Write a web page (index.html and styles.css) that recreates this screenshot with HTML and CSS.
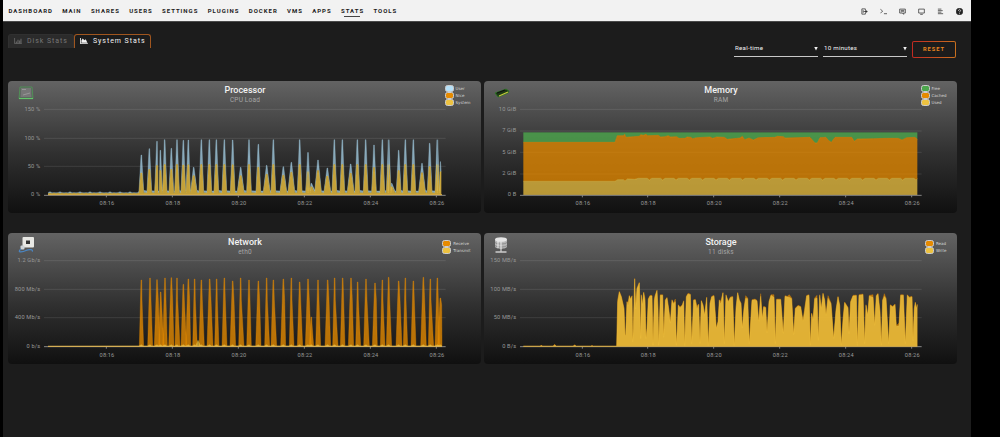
FILE: index.html
```html
<!DOCTYPE html>
<html lang="en">
<head>
    <meta charset="UTF-8">
    <meta name="viewport" content="width=device-width, initial-scale=1.0">
    <title>System Stats</title>
    <link rel="stylesheet" href="styles.css">
</head>
<body>
    <div class="page">
        <header class="menu">
            <nav>
                <a href="#">DASHBOARD</a>
                <a href="#">MAIN</a>
                <a href="#">SHARES</a>
                <a href="#">USERS</a>
                <a href="#">SETTINGS</a>
                <a href="#">PLUGINS</a>
                <a href="#">DOCKER</a>
                <a href="#">VMS</a>
                <a href="#">APPS</a>
                <a href="#" class="active">STATS</a>
                <a href="#">TOOLS</a>
            </nav>
            <div class="tools">
                <svg viewBox="0 0 16 16"><path d="M10 4.500V2H2v12h8v-2.500M5 5v6M6 8h6" /><path class="solid" d="M10.500 5.500l4 2.500-4 2.500z" /></svg>
                <svg viewBox="0 0 16 16"><path d="M1 3l5 4-5 5M9 13h7" /></svg>
                <svg viewBox="0 0 16 16"><path d="M1.500 2.500h13v9h-4v3l-3-3h-6zM4 5.500h8M4 8.500h8" /></svg>
                <svg viewBox="0 0 16 16"><path d="M1.500 2.500h13v9h-13zM5 14.500h6" /></svg>
                <svg viewBox="0 0 16 16"><path d="M2 2.500h8M2 6h11M2 9.500h8M2 13h12" /></svg>
                <svg viewBox="0 0 16 16"><circle class="solid" cx="8" cy="8" r="7.500" /><path class="mark" d="M5.500 6.500C5.500 3 10.500 3 10.500 6c0 2-2.500 1.500-2.500 3.500M8 11v2" /></svg>
            </div>
        </header>

        <div class="toolbar">
            <div class="tabs">
                <a href="#" class="tab"><svg viewBox="0 0 18 14"><path d="M1 0v13h17" fill="none" stroke="currentColor" stroke-width="1.500" /><path d="M4 8h2v4H4zM8 4h2v8H8zM12 6h2v6h-2zM15 2h2v10h-2z" /></svg>Disk Stats</a>
                <a href="#" class="tab current"><svg viewBox="0 0 18 14"><path d="M0 0h2v12h16v2H0z" /><path d="M3 11V6l3-5 4 4 3-2 4 8z" /></svg>System Stats</a>
            </div>
            <div class="controls">
                <div class="select"><span>Real-time</span><i></i></div>
                <div class="select"><span>10 minutes</span><i></i></div>
                <button class="reset">RESET</button>
            </div>
        </div>

        <main class="charts">
            <section class="card">
                <div class="card-head">
                    <svg class="icon" viewBox="0 0 16 14"><path d="M2 1h12l1 11.500H1z" fill="#5a625d" stroke="#4f9a56" stroke-width=".8" /><path d="M1 12.500h14" stroke="#62c76a" stroke-width="1.200" /><path d="M3 2h10l.5 9H2.500z" fill="#777" /><path d="M4 3.500h4M5 9l7-2" stroke="#a5a5a5" stroke-width=".7" /></svg>
                    <div class="title"><h2>Processor</h2><p>CPU Load</p></div>
                    <ul class="legend">
                        <li class="blue">User</li>
                        <li class="orange">Nice</li>
                        <li class="yellow">System</li>
                    </ul>
                </div>
                <svg class="plot" id="cpu" viewBox="24 96 1419 318"></svg>
            </section>

            <section class="card">
                <div class="card-head">
                    <svg class="icon memory" viewBox="0 0 16 10"><path d="M1 5l11-4 3 2-1 2-10 4z" fill="#1d3a16" stroke="#2f7d25" stroke-width=".8" /><path d="M5 8l9-4" stroke="#c8c83c" stroke-width="1.200" /><path d="M3 5l8-3" stroke="#111" stroke-width="1.300" /></svg>
                    <div class="title"><h2>Memory</h2><p>RAM</p></div>
                    <ul class="legend">
                        <li class="green">Free</li>
                        <li class="orange">Cached</li>
                        <li class="yellow">Used</li>
                    </ul>
                </div>
                <svg class="plot" id="ram" viewBox="12 96 1419 318"></svg>
            </section>

            <section class="card">
                <div class="card-head">
                    <svg class="icon network" viewBox="0 0 16 16"><rect x="4.500" y="0" width="11.500" height="10.500" rx="1" fill="#e8e8e4" /><path d="M8 3.500h4v3.500H8z" fill="#333" /><rect x="2.500" y="8.500" width="4" height="4" rx="1" fill="#cdd3d8" /><path d="M3 12c-5 4 2 3 5 1.500s8-1 6 1" fill="none" stroke="#4a86c4" stroke-width="1.200" /></svg>
                    <div class="title"><h2>Network</h2><p>eth0</p></div>
                    <ul class="legend">
                        <li class="orange">Receive</li>
                        <li class="yellow">Transmit</li>
                    </ul>
                </div>
                <svg class="plot" id="net" viewBox="24 93 1419 315"></svg>
            </section>

            <section class="card">
                <div class="card-head">
                    <svg class="icon storage" viewBox="0 0 14 16"><path d="M1 2.500v7c0 3 12 3 12 0v-7z" fill="#b5b5b5" /><ellipse cx="7" cy="2.500" rx="6" ry="2.300" fill="#e6e6e6" /><path d="M1 5.500c2 2 10 2 12 0M1 8.500c2 2 10 2 12 0" fill="none" stroke="#7c7c7c" stroke-width=".7" /><path d="M4 4v7M7 4.500v7.500" stroke="#eee" /><path d="M7 11v4M1.500 15h11" stroke="#ccc" stroke-width="1.300" /></svg>
                    <div class="title"><h2>Storage</h2><p>11 disks</p></div>
                    <ul class="legend">
                        <li class="orange">Read</li>
                        <li class="yellow">Write</li>
                    </ul>
                </div>
                <svg class="plot" id="disk" viewBox="12 93 1419 315"></svg>
            </section>
        </main>
    </div>
    <script src="script.js"></script>
</body>
</html>
```

FILE: styles.css
```css
body {
    margin: 0;
    background-color: #000;
    color: #f2f2f2;
    font-family: Roboto, "Noto Sans", sans-serif;
    overflow: hidden;
}

a {
    color: inherit;
    text-decoration: none;
}

.page {
    box-sizing: border-box;
    width: 968px;
    height: 437px;
    margin-left: 3px;
    background-color: #1c1c1c;
}

/* top menu */
.menu {
    box-sizing: border-box;
    display: flex;
    justify-content: space-between;
    height: 22px;
    padding: 0 8px 0 5.5px;
    background-color: #f2f2f2;
    border-bottom: 1px solid #4a4a4a;
    color: #1c1b1b;
}

.menu nav {
    display: flex;
    gap: 9.3px;
    padding-top: 6px;
}

.menu nav a {
    height: 11px;
    font-size: 6px;
    line-height: 9px;
    font-weight: 700;
    letter-spacing: 1px;
}

.menu nav a.active {
    background: linear-gradient(#444, #444) 3px 10px / 16px 1px no-repeat;
}

.tools {
    display: flex;
    align-items: center;
    gap: 12px;
    padding-top: 2px;
}

.tools svg {
    width: 7px;
    height: 7px;
    fill: none;
    stroke: #333;
    stroke-width: 1.7;
}

.tools .solid {
    fill: #222;
}

.tools .mark {
    stroke: #f2f2f2;
}

/* tabs and selectors */
.toolbar {
    display: flex;
    justify-content: space-between;
    height: 59px;
    padding: 0 15px 0 5px;
    box-sizing: border-box;
}

.tabs {
    display: flex;
    padding-top: 12px;
}

.tab {
    box-sizing: border-box;
    display: flex;
    align-items: center;
    width: 66px;
    height: 14px;
    padding: 0 0 1px 5px;
    border: 1px solid #303030;
    border-bottom: none;
    border-radius: 3px 3px 0 0;
    background-color: #2b2b2b;
    color: #777;
    font-size: 7px;
    letter-spacing: 0.95px;
    white-space: nowrap;
}

.tab svg {
    width: 8px;
    height: 6px;
    margin-right: 5px;
    fill: currentColor;
}

.tab.current {
    width: 77px;
    padding-left: 5px;
    border-color: #a0561f;
    background-color: #1c1c1c;
    color: #f2f2f2;
}

.controls {
    display: flex;
    gap: 5px;
    padding-top: 19px;
}

.select {
    box-sizing: border-box;
    display: flex;
    align-items: center;
    justify-content: space-between;
    width: 84px;
    height: 16px;
    border-bottom: 1px solid #c8c8c8;
    font-size: 6.2px;
    letter-spacing: 0.25px;
}

.select span {
    padding: 0 0 1px 1px;
}

.select i {
    width: 4px;
    height: 4px;
    background-color: #f2f2f2;
    clip-path: polygon(0 0, 100% 0, 50% 100%);
}

.reset {
    box-sizing: border-box;
    width: 44px;
    height: 17px;
    padding: 0 0 1px;
    border: 1px solid transparent;
    border-radius: 2px;
    background: linear-gradient(#1c1c1c, #1c1c1c) padding-box, linear-gradient(90deg, #c22a22, #c8701f) border-box;
    color: #e8851f;
    font-family: inherit;
    font-size: 5.7px;
    font-weight: 700;
    letter-spacing: 1px;
}

/* chart cards */
.charts {
    display: grid;
    grid-template-columns: 473px 473px;
    grid-template-rows: 132px 131px;
    gap: 20px 3px;
    padding-left: 5px;
}

.card {
    border-radius: 4px;
    background: linear-gradient(#636363, #303030 55%, #101010);
}

.card-head {
    display: grid;
    grid-template-columns: 100px 273px 100px;
    height: 26px;
}

.icon {
    width: 16px;
    height: 14px;
    margin: 5px 0 0 10px;
}

.icon.memory {
    height: 10px;
    margin-top: 7px;
}

.icon.network {
    height: 16px;
    margin-top: 4px;
}

.icon.storage {
    width: 14px;
    height: 16px;
    margin: 4px 0 0 10px;
}

.title {
    padding: 4px 0 0 1px;
    text-align: center;
}

.title h2 {
    margin: 0;
    font-size: 9px;
    line-height: 11px;
    font-weight: 500;
}

.title p {
    margin: 0;
    color: #a5a5a5;
    font-size: 6.5px;
    line-height: 9px;
    letter-spacing: 0.2px;
}

.legend {
    display: flex;
    flex-direction: column;
    justify-self: end;
    margin: 4px 10.5px 0 0;
    padding: 0;
    list-style: none;
    color: #d5d5d5;
    font-family: "DejaVu Sans", sans-serif;
    font-size: 4px;
    line-height: 7px;
}

#net, #disk {
    height: 105px;
}

.card:nth-child(n+3) .legend {
    margin-top: 7px;
}

.legend li {
    display: flex;
    align-items: center;
    gap: 2px;
    height: 7px;
}

.legend li::before {
    content: "";
    box-sizing: border-box;
    width: 9px;
    height: 7px;
    border: 1px solid #ccc;
    border-radius: 2.500px;
    background-color: #edc240;
}

.legend .blue::before {
    background-color: #b5e0f8;
}

.legend .orange::before {
    background-color: #e68a00;
}

.legend .green::before {
    background-color: #4da74d;
}

.plot {
    display: block;
    width: 473px;
    height: 106px;
    overflow: visible;
}

.plot text {
    fill: #999;
    font-size: 17px;
    letter-spacing: 0.5px;
}

.plot .x-label {
    text-anchor: middle;
}

.plot .y-label {
    text-anchor: end;
}

.grid {
    stroke: rgba(255, 255, 255, 0.1);
    stroke-width: 3;
}

.axis {
    stroke: #858585;
    stroke-width: 3;
}
```

FILE: script.js
```js
var NS = 'http://www.w3.org/2000/svg';
var BLUE = '#a5d0e6', ORANGE = '#e68a00', YELLOW = '#edc240', GREEN = '#4da74d';

function add(svg, name, attrs, text) {
    var el = document.createElementNS(NS, name);
    for (var key in attrs) el.setAttribute(key, attrs[key]);
    if (text) el.textContent = text;
    svg.appendChild(el);
}

function area(svg, points, base, color, opacity) {
    var line = points.map(function (p) { return p.join(','); }).join(' ');
    var first = points[0][0], last = points[points.length - 1][0];
    add(svg, 'polygon', { points: first + ',' + base + ' ' + line + ' ' + last + ',' + base, fill: color, 'fill-opacity': opacity });
    add(svg, 'polyline', { points: line, fill: 'none', stroke: color, 'stroke-width': 1.5, 'stroke-opacity': 0.65 });
}

function grid(svg, left, labels, rows, base) {
    labels.forEach(function (label, i) {
        if (rows[i] !== base) add(svg, 'line', { 'class': 'grid', x1: left, x2: left + 1205, y1: rows[i], y2: rows[i] });
        add(svg, 'text', { 'class': 'y-label', x: left - 11, y: rows[i] + 4 }, label);
    });
}

function axis(svg, left, base, ticks) {
    add(svg, 'line', { 'class': 'axis', x1: left, x2: left + 1205, y1: base + 1, y2: base + 1 });
    ticks.forEach(function (x, i) {
        add(svg, 'line', { 'class': 'axis', x1: x, x2: x, y1: base, y2: base + 7 });
        add(svg, 'text', { 'class': 'x-label', x: x + 2, y: base + 31 }, '08:' + (16 + i * 2));
    });
}

var leftTicks = [319, 517, 715, 913, 1111, 1309];
var rightTicks = [307, 503, 701, 899, 1097, 1295];

// x and top of every load burst
var cpu = [[424, 240], [448, 221], [471, 199], [481, 226], [494, 194], [514, 220], [531, 194], [550, 196], [565, 195],
    [581, 277], [604, 194], [628, 194], [649, 194], [673, 194], [698, 195], [722, 277], [747, 194], [775, 208],
    [800, 271], [820, 194], [850, 275], [874, 262], [899, 194], [924, 232], [934, 325], [954, 255], [982, 279],
    [1003, 194], [1027, 194], [1052, 267], [1072, 194], [1097, 194], [1122, 210], [1147, 194], [1166, 194],
    [1175, 325], [1196, 226], [1216, 194], [1240, 194], [1266, 265], [1289, 205], [1312, 194], [1322, 260]];

function drawCpu() {
    var svg = document.getElementById('cpu');
    grid(svg, 132, ['150 %', '100 %', '50 %', '0 %'], [103, 190, 274, 360], 360);
    var user = [], system = [], x;
    for (x = 144; x < 416; x += 6) {
        user.push([x, 353 - (x * 7 % 5 === 0 ? 3 : 0)]);
        system.push([x, 356 - x % 4]);
    }
    cpu.forEach(function (p, i) {
        var top = p[1], wide = top > 250 ? 10 : 7;
        var sys = 360 - (360 - top) * (top > 250 ? 0.7 : 0.55);
        user.push([p[0] - wide, 348], [p[0] - 1, top], [p[0] + 1, top], [p[0] + wide, 346 + i % 3]);
        system.push([p[0] - wide, 354], [p[0] - 2, sys], [p[0] + 2, sys], [p[0] + wide, 353]);
    });
    [user, system].forEach(function (list) {
        list.sort(function (a, b) { return a[0] - b[0]; });
        while (list[list.length - 1][0] > 1326) list.pop();
    });
    // user load sits on top of system load
    add(svg, 'polygon', { points: user.concat(system.slice().reverse()).join(' '), fill: BLUE, 'fill-opacity': 0.75 });
    add(svg, 'polyline', { points: user.join(' '), fill: 'none', stroke: BLUE, 'stroke-width': 1.5, 'stroke-opacity': 0.6 });
    area(svg, system, 360, YELLOW, 0.8);
    axis(svg, 132, 360, leftTicks);
    add(svg, 'line', { x1: 144, x2: 1326, y1: 359, y2: 359, stroke: '#d8ad45', 'stroke-width': 3 });
}

function drawRam() {
    var svg = document.getElementById('ram');
    grid(svg, 120, ['10 GiB', '7 GiB', '5 GiB', '2 GiB', '0 B'], [103, 168, 232, 297, 360], 360);
    var cached = [[130, 202], [405, 202], [412, 182], [430, 182], [434, 178], [438, 187], [460, 185], [478, 184], [482, 179],
        [490, 181], [498, 178], [503, 182], [535, 181], [542, 186], [555, 185], [565, 182], [572, 186], [590, 185],
        [597, 190], [615, 190], [621, 186], [632, 187], [638, 191], [650, 188], [690, 186], [698, 190], [710, 186],
        [733, 187], [742, 193], [780, 189], [787, 184], [794, 194],
        [807, 189], [820, 195], [835, 188], [885, 187], [892, 184], [910, 185], [915, 189], [990, 187], [1005, 204],
        [1012, 204], [1020, 188], [1038, 187], [1045, 196], [1054, 202], [1065, 187], [1115, 187], [1123, 199],
        [1132, 192], [1180, 191], [1220, 190], [1255, 190], [1266, 195], [1280, 188], [1305, 187], [1312, 193]];
    var used = [[130, 319], [405, 319], [413, 314], [430, 314], [435, 318], [442, 312], [465, 313]];
    for (var x = 475; x < 1300; x += 40) used.push([x, 310], [x + 27, 310], [x + 33, 315]);
    used.push([1312, 311]);

    // stacked bands, each drawn between its own line and the one below
    function band(top, bottom, color, opacity) {
        add(svg, 'polygon', { points: top.concat(bottom.slice().reverse()).join(' '), fill: color, 'fill-opacity': opacity });
        add(svg, 'polyline', { points: top.join(' '), fill: 'none', stroke: color, 'stroke-width': 2, 'stroke-opacity': 0.7 });
    }
    band([[130, 173], [1312, 173]], cached, GREEN, 0.8);
    band(cached, used, ORANGE, 0.77);
    band(used, [[130, 360], [1312, 360]], YELLOW, 0.75);
    axis(svg, 120, 360, rightTicks);
}

var net = [[424, 156], [450, 150], [471, 155], [482, 192], [495, 150], [514, 149], [531, 150], [550, 169], [565, 153],
    [584, 153], [604, 156], [629, 153], [650, 153], [673, 150], [698, 159], [722, 150], [747, 156], [775, 159],
    [800, 150], [820, 156], [850, 153], [874, 150], [899, 162], [924, 153], [934, 267], [954, 156], [983, 156],
    [1004, 150], [1028, 150], [1053, 150], [1073, 162], [1098, 153], [1125, 165], [1147, 156], [1166, 148],
    [1196, 159], [1216, 150], [1240, 159], [1270, 148], [1291, 153], [1312, 150], [1321, 210]];

function drawNetwork() {
    var svg = document.getElementById('net');
    grid(svg, 132, ['1.2 Gb/s', '800 Mb/s', '400 Mb/s', '0 b/s'], [98, 184, 269, 355], 355);
    net.forEach(function (p, i) {
        var x = p[0], right = Math.min(x + 7 + i % 4, 1326);
        area(svg, [[x - 6 - i % 3, 354], [x - 1, p[1]], [x + 1, p[1]], [x + 2 + i % 3, Math.max(215, p[1] + 20)], [right, 354]], 355, ORANGE, 0.78);
    });
    area(svg, [[587, 354], [594, 337], [602, 354]], 355, YELLOW, 0.7);
    var sent = [[144, 355]];
    net.forEach(function (p) { sent.push([p[0] - 7, 354], [p[0], 350], [p[0] + 5, 354]); });
    area(svg, sent, 355, YELLOW, 0.8);
    axis(svg, 132, 355, leftTicks);
    add(svg, 'line', { x1: 144, x2: 1326, y1: 355, y2: 355, stroke: '#e6b850', 'stroke-width': 3 });
}

var disk = [[130, 355], [180, 355], [184, 351], [188, 355], [219, 355], [224, 349], [229, 355], [279, 355], [284, 350],
    [289, 355], [332, 355], [336, 352], [340, 355],
    [410, 355], [413, 215], [418, 190], [424, 205], [432, 240], [435, 320], [437, 320], [441, 220], [444, 225], [448, 202],
    [452, 212], [456, 203], [458, 340], [460, 300], [464, 151], [467, 235], [471, 180], [478, 163], [482, 330], [484, 200],
    [487, 230], [491, 192], [495, 210], [498, 330], [501, 300], [505, 212], [510, 202], [516, 202], [519, 350], [523, 210],
    [526, 200], [531, 186], [534, 240], [536, 350], [541, 200], [548, 200], [551, 320], [556, 215], [561, 208], [566, 240],
    [571, 283], [576, 215], [580, 225], [586, 213], [589, 350], [592, 300], [595, 230], [600, 237], [607, 230], [611, 218],
    [614, 350], [619, 205], [624, 196], [631, 198], [635, 345], [641, 215], [646, 214], [651, 235], [656, 228], [660, 345],
    [664, 217], [669, 230], [674, 260], [680, 207], [685, 350], [690, 225], [695, 205], [702, 202], [709, 300], [714, 280],
    [718, 215], [722, 220], [729, 193], [733, 345],
    [738, 200], [745, 220], [751, 207], [758, 205], [763, 350], [768, 240], [773, 193], [778, 215], [783, 225], [787, 298],
    [792, 240], [797, 203], [803, 210], [808, 345], [816, 215], [825, 213], [831, 217], [836, 280], [842, 197], [847, 270],
    [851, 235], [857, 237], [861, 312], [867, 220], [873, 200], [882, 200], [886, 345], [890, 213], [902, 213], [910, 315],
    [915, 203], [922, 205], [928, 200], [935, 210], [941, 318], [946, 240], [954, 232], [962, 235], [969, 278], [974, 240],
    [980, 202], [987, 200], [991, 350], [995, 255], [999, 275], [1004, 210], [1011, 202], [1015, 335], [1019, 200],
    [1024, 240], [1029, 195], [1034, 215], [1038, 260], [1044, 203], [1053, 225], [1061, 330], [1068, 245], [1074, 205],
    [1079, 230], [1084, 350], [1089, 270], [1094, 222], [1104, 238], [1107, 315], [1112, 220], [1119, 202], [1129, 201],
    [1132, 345], [1137, 200], [1149, 198], [1154, 345], [1158, 230], [1163, 260], [1168, 202], [1179, 200], [1184, 290],
    [1189, 202], [1194, 196], [1200, 250], [1204, 350], [1208, 215], [1213, 197], [1218, 210], [1226, 345], [1231, 230],
    [1238, 235], [1245, 228], [1249, 293], [1257, 285], [1262, 200], [1270, 200], [1276, 345], [1282, 200], [1288, 207],
    [1296, 205], [1299, 330], [1303, 240], [1306, 222], [1309, 240], [1312, 228]];

function drawStorage() {
    var svg = document.getElementById('disk');
    grid(svg, 120, ['150 MB/s', '100 MB/s', '50 MB/s', '0 B/s'], [98, 184, 269, 355], 355);
    area(svg, disk, 355, ORANGE, 0.7);
    area(svg, disk.map(function (p, i) { return [p[0], Math.min(p[1] + (i % 7 === 0 ? 8 : 2), 355)]; }), 355, YELLOW, 0.8);
    axis(svg, 120, 355, rightTicks);
    add(svg, 'line', { x1: 130, x2: 1312, y1: 355, y2: 355, stroke: '#d8ad45', 'stroke-width': 3 });
}

drawCpu();
drawRam();
drawNetwork();
drawStorage();
```
